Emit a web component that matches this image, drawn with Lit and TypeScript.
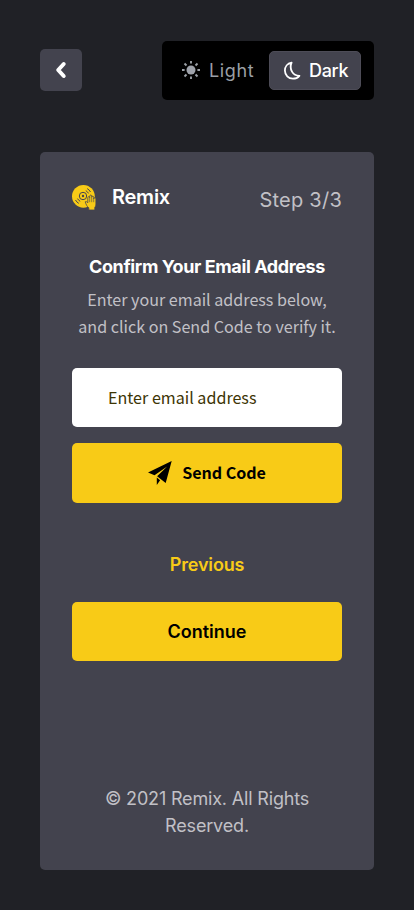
import { LitElement, html, css } from "lit";
import { customElement } from "lit/decorators.js";

@customElement("app-root")
export class AppRoot extends LitElement {
  static styles = css`
    :host {
      display: block;
      box-sizing: border-box;
      min-height: 910px;
      padding: 41px 40px 40px;
      background: #202126;
      color: #fff;
      font: 18px/27px Inter, "Liberation Sans", sans-serif;
    }
    * { box-sizing: border-box; }
    svg { display: block; flex: none; }
    button { border: 0; margin: 0; padding: 0; font: inherit; color: inherit; background: none; }
    h1, p { margin: 0; }
    header { display: flex; align-items: flex-start; justify-content: space-between; height: 59px; }
    .back {
      display: grid; place-items: center; width: 42px; height: 42px; margin-top: 8px;
      border-radius: 5px; background: #43434e;
    }
    .theme { display: flex; align-items: center; width: 212px; height: 59px; padding: 0 13px 0 19px; border-radius: 5px; background: #000; }
    .mode { display: flex; align-items: center; height: 39px; white-space: nowrap; }
    .light { width: 88px; gap: 8px; color: #9a9fa5; letter-spacing: 0.65px; }
    .dark {
      width: 92px; padding-left: 13px; gap: 8px; border-radius: 5px; background: #43434e;
      border: 1px solid #4d4c57; font-weight: 500; letter-spacing: -0.35px;
    }
    main {
      display: flex; flex-direction: column; height: 718px; margin-top: 52px;
      padding: 32px 32px 31px; border-radius: 5px; background: #43434e; text-align: center;
    }
    .top { display: flex; align-items: center; height: 26px; }
    .brand { margin-left: 15px; font-size: 20px; font-weight: 600; letter-spacing: -0.25px; }
    .step { margin: 7px 0 0 auto; font-size: 20px; color: #c1c0c6; letter-spacing: 0.25px; }
    h1 { margin-top: 43px; font-size: 18px; line-height: 27px; font-weight: 700; white-space: nowrap; letter-spacing: -0.4px; }
    .sans { font-family: "Noto Sans CJK SC", sans-serif; font-size: 16.1px; }
    .hint { margin: 6px -10px 0; color: #c1c0c6; white-space: nowrap; }
    input {
      width: 100%; height: 59px; margin-top: 28px; padding: 0 36px 2px; border: 0; border-radius: 5px;
      background: #fff; line-height: 27px; color: #3d3505;
    }
    input::placeholder { color: #3d3505; opacity: 1; }
    .btn {
      display: flex; align-items: center; justify-content: center; width: 100%; height: 59px;
      border-radius: 5px; background: #f8cb17; color: #000; font-weight: 600;
    }
    .send { height: 60px; margin-top: 16px; gap: 10px; font-weight: 700; letter-spacing: -0.05px; }
    .send span { padding-bottom: 2px; }
    .previous { margin-top: 48px; color: #f8cb17; font-weight: 600; letter-spacing: -0.15px; }
    .continue { margin-top: 24px; }
    footer { margin-top: auto; color: #c1c0c6; letter-spacing: -0.17px; }
  `;

  render() {
    return html`
      <header>
        <button class="back" aria-label="Back">
          <svg width="14" height="18" viewBox="0 0 14 18" fill="none" stroke="#fff" stroke-width="4" stroke-linecap="round" stroke-linejoin="round"><path d="M9.7 3 4.200 9l5.500 6" /></svg>
        </button>
        <div class="theme">
          <button class="mode light">
            <svg width="20" height="20" viewBox="0 0 20 20" fill="none" stroke="#9a9fa5" stroke-width="1.9">
              <circle cx="10" cy="9" r="4.5" fill="#9fa3ab" stroke="none" />
              <path d="M10 0v2.6M10 15.4V18M1 9h2.6M16.4 9H19M3.5 2.5l2 2M14.5 13.5l2 2M3.5 15.5l2-2M14.5 4.5l2-2" />
            </svg>
            <span>Light</span>
          </button>
          <button class="mode dark">
            <svg width="18" height="20" viewBox="0 0 18 20" fill="none" stroke="#fff" stroke-width="1.8" stroke-linejoin="round">
              <path d="M8.6 1.6C4.4 2.4 1.8 5.8 1.9 9.6c.1 4.8 3.5 8.1 8 8.1 2.7 0 4.9-1 6.5-2.9-3.2 0-5.7-1.2-7.4-4.2C7.4 7.8 7.3 4.5 8.6 1.6Z" />
            </svg>
            <span>Dark</span>
          </button>
        </div>
      </header>
      <main>
        <div class="top">
          <svg width="25" height="26" viewBox="0 0 25 26">
            <circle cx="11.4" cy="12.3" r="11.4" fill="#f8cb17" />
            <g fill="none" stroke="#45444f" stroke-width="1">
              <circle cx="11" cy="12" r="3.7" />
              <circle cx="11" cy="12" r="1.2" fill="#45444f" stroke="none" />
              <path d="M13.8 6.7c1.2.6 2.1 1.5 2.7 2.7M15.2 4.6c1.4.8 2.6 2 3.3 3.4M8.2 17.3c-1.2-.6-2.1-1.5-2.7-2.7M6.8 19.4c-1.4-.8-2.6-2-3.3-3.4" />
            </g>
            <path d="M13.2 17.8c1-.6 1.9.1 2.6 1v-5.2c0-1.3 1.9-1.3 1.9 0v-1.5c0-1.4 2-1.4 2 0v1c0-1.2 2-1.2 2 0v1.7c0-1.3 2.2-1.3 2.2 0v5.1c0 1.7-.4 2.600-1.100 3.400V26h-6v-2.200c-1.800-1.300-2.700-3.200-3.600-6Z" fill="#f8cb17" stroke="#45444f" stroke-width=".8" />
            <path d="M17.7 13.5v4.7M19.7 13v5.2M21.7 14.5v3.7" stroke="#45444f" stroke-width=".6" />
          </svg>
          <span class="brand">Remix</span>
          <span class="step">Step 3/3</span>
        </div>
        <h1>Confirm Your Email Address</h1>
        <p class="hint sans">Enter your email address below,<br />and click on Send Code to verify it.</p>
        <input class="sans" type="email" placeholder="Enter email address" />
        <button class="btn send sans">
          <svg width="24" height="24" viewBox="0 0 24 24">
            <path d="M23.7 0 0 11.5l6.5 2.7L19.2 5.6 9.1 15.3l8.6 6.7ZM8.8 16.4V24l3.3-4.8Z" />
          </svg>
          <span>Send Code</span>
        </button>
        <button class="previous">Previous</button>
        <button class="btn continue">Continue</button>
        <footer>© 2021 Remix. All Rights<br />Reserved.</footer>
      </main>
    `;
  }
}
